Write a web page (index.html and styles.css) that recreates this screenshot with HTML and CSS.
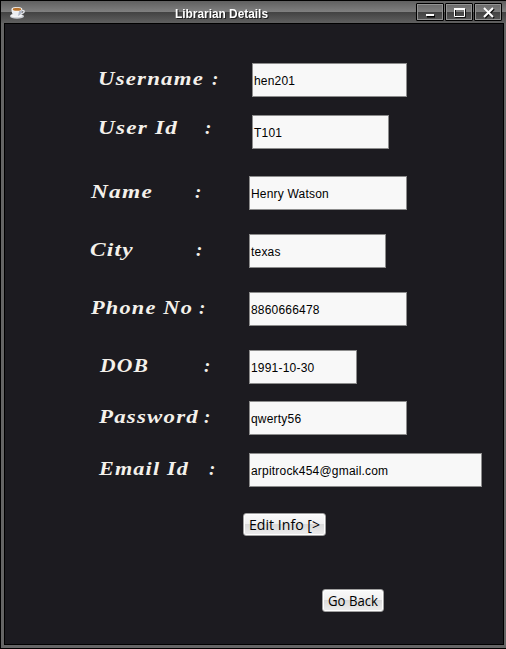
FILE: index.html
```
<!DOCTYPE html>
<html lang="en">
<head>
<meta charset="utf-8">
<title>Librarian Details</title>
<link rel="stylesheet" href="styles.css">
</head>
<body>
<div class="window">
  <header class="titlebar">
    <svg class="cup" width="18" height="16" viewBox="0 0 18 16">
      <ellipse cx="8" cy="11.2" rx="7" ry="2.5" fill="#c9ccd2"/>
      <ellipse cx="7.5" cy="10.5" rx="6" ry="1.7" fill="#f4f4f5"/>
      <path d="M12.5 5.5c4-.8 3.500 3-.8 3.200" fill="none" stroke="#e4e6eb" stroke-width="1.300"/>
      <path d="M2.500 4.200c0 4 1.500 7 5 7s5.500-3 5.700-6.700z" fill="#eceef2"/>
      <path d="M9 11c2.800-1 4-3.500 4.200-6.300l-3 1z" fill="#aeb5c5"/>
      <ellipse cx="7.900" cy="4.100" rx="5.400" ry="2.200" fill="#fff"/>
      <ellipse cx="8" cy="4.200" rx="4.300" ry="1.500" fill="#b8732d"/>
    </svg>
    <svg class="caption" width="100" height="20"><text x="0" y="15" textLength="93" lengthAdjust="spacingAndGlyphs">Librarian Details</text></svg>
    <div class="controls">
      <div class="control"><svg width="26" height="16"><path d="M10 12.500h8" stroke="#000" stroke-width="2"/><path d="M9 11h8" stroke="#fff" stroke-width="2"/></svg></div>
      <div class="control"><svg width="26" height="16"><path d="M9.500 5.500h10v8h-10z" fill="none" stroke="#111"/><path d="M8.500 4.500h10v8h-10z" fill="none" stroke="#fff"/><path d="M8 5h11" stroke="#fff" stroke-width="2"/></svg></div>
      <div class="control"><svg width="26" height="16"><path d="M10 5l9 9m0-9l-9 9" stroke="#111" stroke-width="2"/><path d="M9 4l9 9m0-9l-9 9" stroke="#fff" stroke-width="2"/></svg></div>
    </div>
  </header>
  <main class="content">
    <div class="row username"><svg class="label"><text x="93" y="22" textLength="106" lengthAdjust="spacingAndGlyphs">Username</text><text x="207" y="22">:</text></svg><div class="field">hen201</div></div>
    <div class="row user-id"><svg class="label"><text x="93" y="19" textLength="80" lengthAdjust="spacingAndGlyphs">User Id</text><text x="200" y="19">:</text></svg><div class="field">T101</div></div>
    <div class="row name"><svg class="label"><text x="86" y="22" textLength="62" lengthAdjust="spacingAndGlyphs">Name</text><text x="190" y="22">:</text></svg><div class="field">Henry Watson</div></div>
    <div class="row city"><svg class="label"><text x="85" y="22" textLength="44" lengthAdjust="spacingAndGlyphs">City</text><text x="191" y="22">:</text></svg><div class="field">texas</div></div>
    <div class="row phone"><svg class="label"><text x="86" y="22" textLength="102" lengthAdjust="spacingAndGlyphs">Phone No</text><text x="194" y="22">:</text></svg><div class="field">8860666478</div></div>
    <div class="row dob"><svg class="label"><text x="95" y="22" textLength="49" lengthAdjust="spacingAndGlyphs">DOB</text><text x="199" y="22">:</text></svg><div class="field">1991-10-30</div></div>
    <div class="row password"><svg class="label"><text x="94" y="22" textLength="100" lengthAdjust="spacingAndGlyphs">Password</text><text x="199" y="22">:</text></svg><div class="field">qwerty56</div></div>
    <div class="row email"><svg class="label"><text x="94" y="22" textLength="90" lengthAdjust="spacingAndGlyphs">Email Id</text><text x="204" y="22">:</text></svg><div class="field">arpitrock454@gmail.com</div></div>
    <button class="button edit"><svg width="79" height="21"><text x="4" y="16" textLength="71" lengthAdjust="spacingAndGlyphs">Edit Info [&gt;</text></svg></button>
    <button class="button back"><svg width="58" height="21"><text x="4" y="16" textLength="50" lengthAdjust="spacingAndGlyphs">Go Back</text></svg></button>
  </main>
</div>
</body>
</html>
```
FILE: styles.css
```
* { box-sizing: border-box; }
body { margin: 0; overflow: hidden; background: #000; }
svg { display: block; flex: none; overflow: visible; }

.window {
  width: 506px;
  height: 649px;
  display: flex;
  flex-direction: column;
  border: 1px solid #000;
  border-right: 0;
  background: #656565;
  padding: 0 2px 3px 3px;
}

.titlebar {
  height: 22px;
  flex: none;
  display: flex;
  margin: 0 -2px 0 -3px;
  padding: 2px 4px 0 8px;
  background: linear-gradient(#606060, #808080 11px, #424242 11px, #606060 22px);
}
.cup { margin-top: 2px; }
.caption {
  margin-left: 148px;
  font: bold 12px "Liberation Sans", Arial, sans-serif;
  fill: #fff;
  filter: drop-shadow(1px 1px 0 #222);
}
.controls { display: flex; gap: 1px; margin-left: auto; }
.control {
  width: 28px;
  height: 18px;
  border: 1px solid #000;
  border-radius: 1px;
  box-shadow: inset 0 0 0 1px #929292;
}

.content {
  flex: 1;
  border: 1px solid #000;
  background: #1c1b20;
}
.row { display: flex; height: 34px; }
.username { margin-top: 39px; }
.user-id { margin-top: 18px; }
.name { margin-top: 27px; }
.city, .phone, .dob { margin-top: 24px; }
.password { margin-top: 17px; }
.email { margin-top: 18px; }

.label {
  width: 244px;
  height: 34px;
  font: italic bold 19px "Liberation Serif", "Times New Roman", serif;
  letter-spacing: 1px;
  fill: #f4f1eb;
}
.field {
  width: 158px;
  border: 1px solid #8c8c8c;
  background: #f8f8f8;
  color: #000;
  padding: 2px 0 0 1px;
  font: 12px/30px "Liberation Sans", Arial, sans-serif;
  letter-spacing: 0.2px;
  white-space: nowrap;
}
.username .field { width: 155px; margin-left: 3px; }
.user-id .field { width: 137px; margin-left: 3px; }
.city .field { width: 137px; }
.dob .field { width: 108px; }
.email .field { width: 233px; }

.button {
  display: block;
  height: 23px;
  padding: 0;
  border: 1px solid #a0a0a0;
  border-radius: 3px;
  box-shadow: inset 0 0 0 1px #fff;
  background: linear-gradient(#fafafa, #f0f0f0 10px, #d9d9d9 10px, #ededed);
  font: 14px "Open Sans", "Liberation Sans", sans-serif;
  color: #000;
}
.button svg { margin: 0 1px; }
.edit { width: 83px; margin: 26px 0 0 238px; }
.back { width: 62px; margin: 53px 0 0 317px; }
```
